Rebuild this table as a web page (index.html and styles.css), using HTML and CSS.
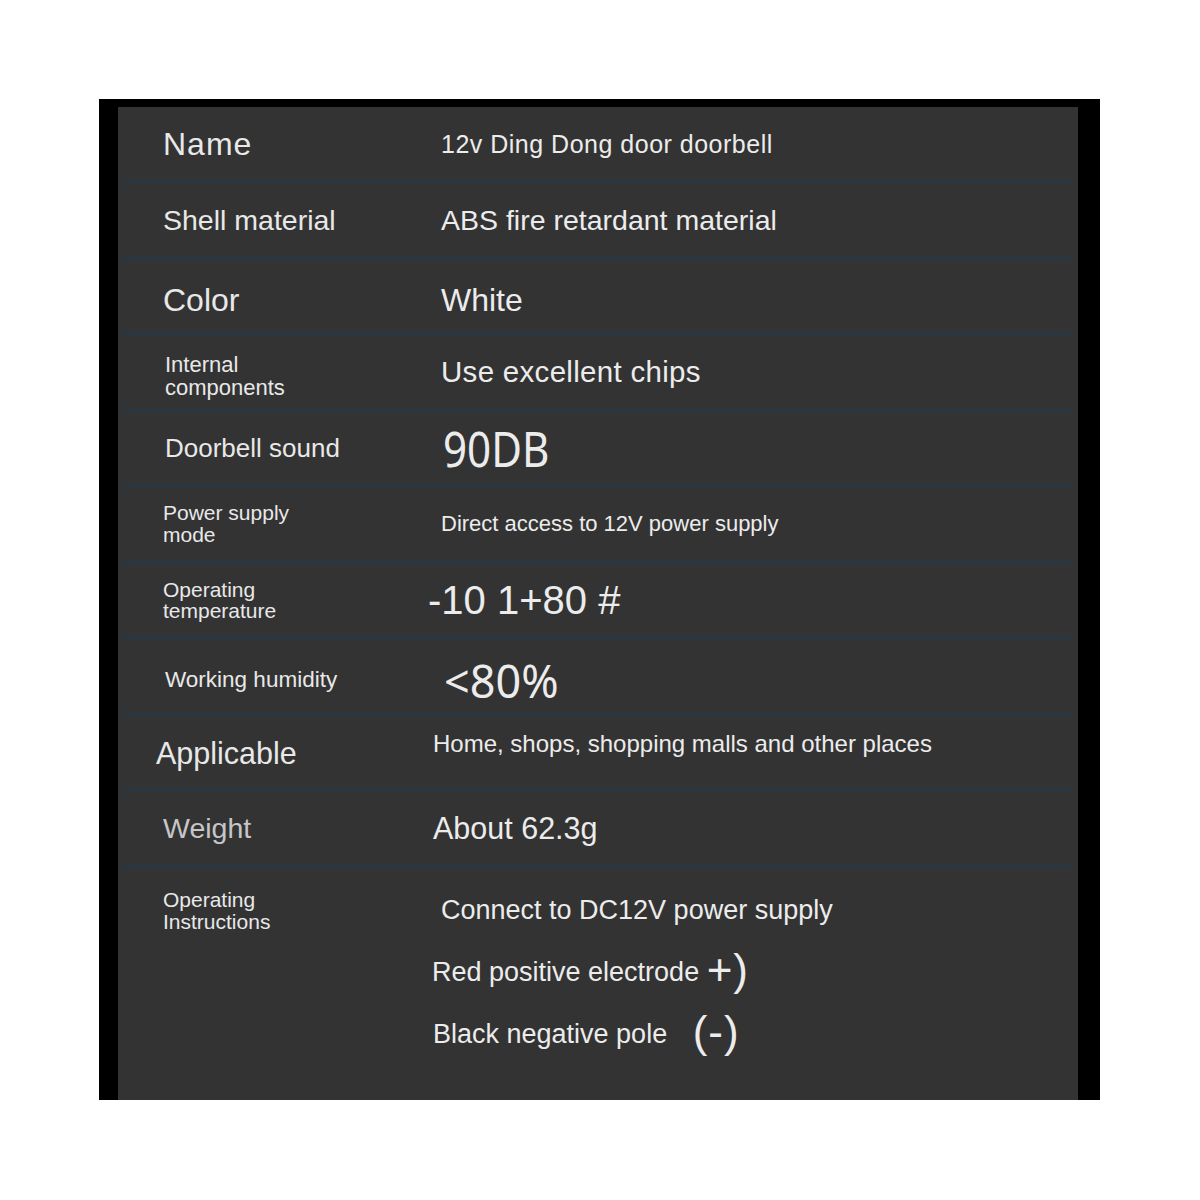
FILE: index.html
```html
<!DOCTYPE html>
<html lang="en">
  <head>
    <meta charset="utf-8" />
    <link rel="stylesheet" href="styles.css">
    <title>Doorbell Specifications</title>
  </head>
  <body>
    <div class="frame">
      <div class="panel">
        <div class="row">
          <div class="label t-xl wide">Name</div>
          <div class="value t-sm wide">12v Ding Dong door doorbell</div>
        </div>
        <div class="row">
          <div class="label t-lg">Shell material</div>
          <div class="value t-lg">ABS fire retardant material</div>
        </div>
        <div class="row">
          <div class="label t-xl drop">Color</div>
          <div class="value t-xl drop">White</div>
        </div>
        <div class="row">
          <div class="label two-line drop nudge">Internal<br />components</div>
          <div class="value t-lg wider">Use excellent chips</div>
        </div>
        <div class="row">
          <div class="label t-md nudge">Doorbell sound</div>
          <div class="value"><span class="narrow big-db">90DB</span></div>
        </div>
        <div class="row">
          <div class="label two-line">Power supply<br />mode</div>
          <div class="value t-xs">Direct access to 12V power supply</div>
        </div>
        <div class="row">
          <div class="label two-line tight">Operating<br />temperature</div>
          <div class="value t-huge pull">-10 1+80 #</div>
        </div>
        <div class="row">
          <div class="label t-sm drop nudge">Working humidity</div>
          <div class="value drop"><span class="narrow big-pct">&lt;80%</span></div>
        </div>
        <div class="row top">
          <div class="label t-xl pull-label">Applicable</div>
          <div class="value t-md-sm pull-some">Home, shops, shopping malls and other places</div>
        </div>
        <div class="row">
          <div class="label t-lg dim">Weight</div>
          <div class="value t-lg-xl pull-some">About 62.3g</div>
        </div>
        <div class="row last">
          <div class="label two-line">Operating<br />Instructions</div>
          <div class="value steps">
            <div class="step">Connect to DC12V power supply</div>
            <div class="step pull-more">Red positive electrode <span class="sign">+)</span></div>
            <div class="step pull-some">Black negative pole <span class="sign gap">(-)</span></div>
          </div>
        </div>
      </div>
    </div>
  </body>
</html>
```

FILE: styles.css
```css
body {
  margin: 0;
  background: #fff;
  font-family: "Liberation Sans", Arial, sans-serif;
}
.frame {
  box-sizing: border-box;
  width: 1001px;
  height: 1001px;
  margin: 99px 0 0 99px;
  padding: 8px 22px 0 19px;
  background: #000;
}
.panel {
  height: 100%;
  padding: 0 8px 0 6px;
  background: #333;
  color: #e8e8e8;
}
.row {
  display: flex;
  align-items: center;
  height: 74px;
  border-bottom: 2px solid #1d3a4e;
}
.label {
  box-sizing: border-box;
  width: 317px;
  padding-left: 39px;
  flex-shrink: 0;
}
.value {
  flex: 1;
  color: #ececec;
}
.t-xs {
  font-size: 22px;
}
.t-sm {
  font-size: 22.5px;
}
.t-md-sm {
  font-size: 24px;
}
.t-md {
  font-size: 26px;
}
.t-lg {
  font-size: 28.5px;
}
.t-lg-xl {
  font-size: 30.5px;
}
.t-xl {
  font-size: 32px;
}
.t-huge {
  font-size: 40px;
}
.wide {
  letter-spacing: 1px;
}
.value.t-sm.wide {
  font-size: 25px;
  letter-spacing: 0.5px;
}
.wider {
  font-size: 29.5px;
  letter-spacing: 0.3px;
}
.two-line {
  font-size: 21px;
  line-height: 22px;
}
.two-line.tight {
  line-height: 21px;
}
.label.two-line.nudge {
  font-size: 22px;
  line-height: 23px;
}
.nudge {
  padding-left: 41px;
}
.drop {
  padding-top: 8px;
}
.dim {
  color: #c6c6c6;
}
.pull {
  margin-left: -13px;
}
.pull-some {
  margin-left: -8px;
}
.pull-more {
  margin-left: -9px;
}
.pull-label {
  padding-left: 32px;
  padding-top: 2px;
  font-size: 30.5px;
}
.narrow {
  display: inline-block;
  font-family: "Noto Sans", sans-serif;
  transform-origin: left center;
}
.big-db {
  font-size: 49px;
  line-height: 1;
  margin-left: 2px;
  transform: scaleX(0.86);
}
.big-pct {
  font-size: 45px;
  line-height: 1;
  margin-left: 3px;
}
.row.top {
  align-items: flex-start;
}
.row.top .label {
  align-self: center;
}
.row.top .value {
  padding-top: 15px;
}
.row.last {
  height: auto;
  align-items: flex-start;
  border-bottom: none;
  padding-top: 22px;
}
.steps {
  display: flex;
  flex-direction: column;
  gap: 22px;
  padding-top: 3px;
  font-size: 27px;
}
.step {
  line-height: 37px;
}
.sign {
  font-size: 44px;
  vertical-align: -4px;
  letter-spacing: 1px;
}
.sign.gap {
  margin-left: 18px;
}
```
